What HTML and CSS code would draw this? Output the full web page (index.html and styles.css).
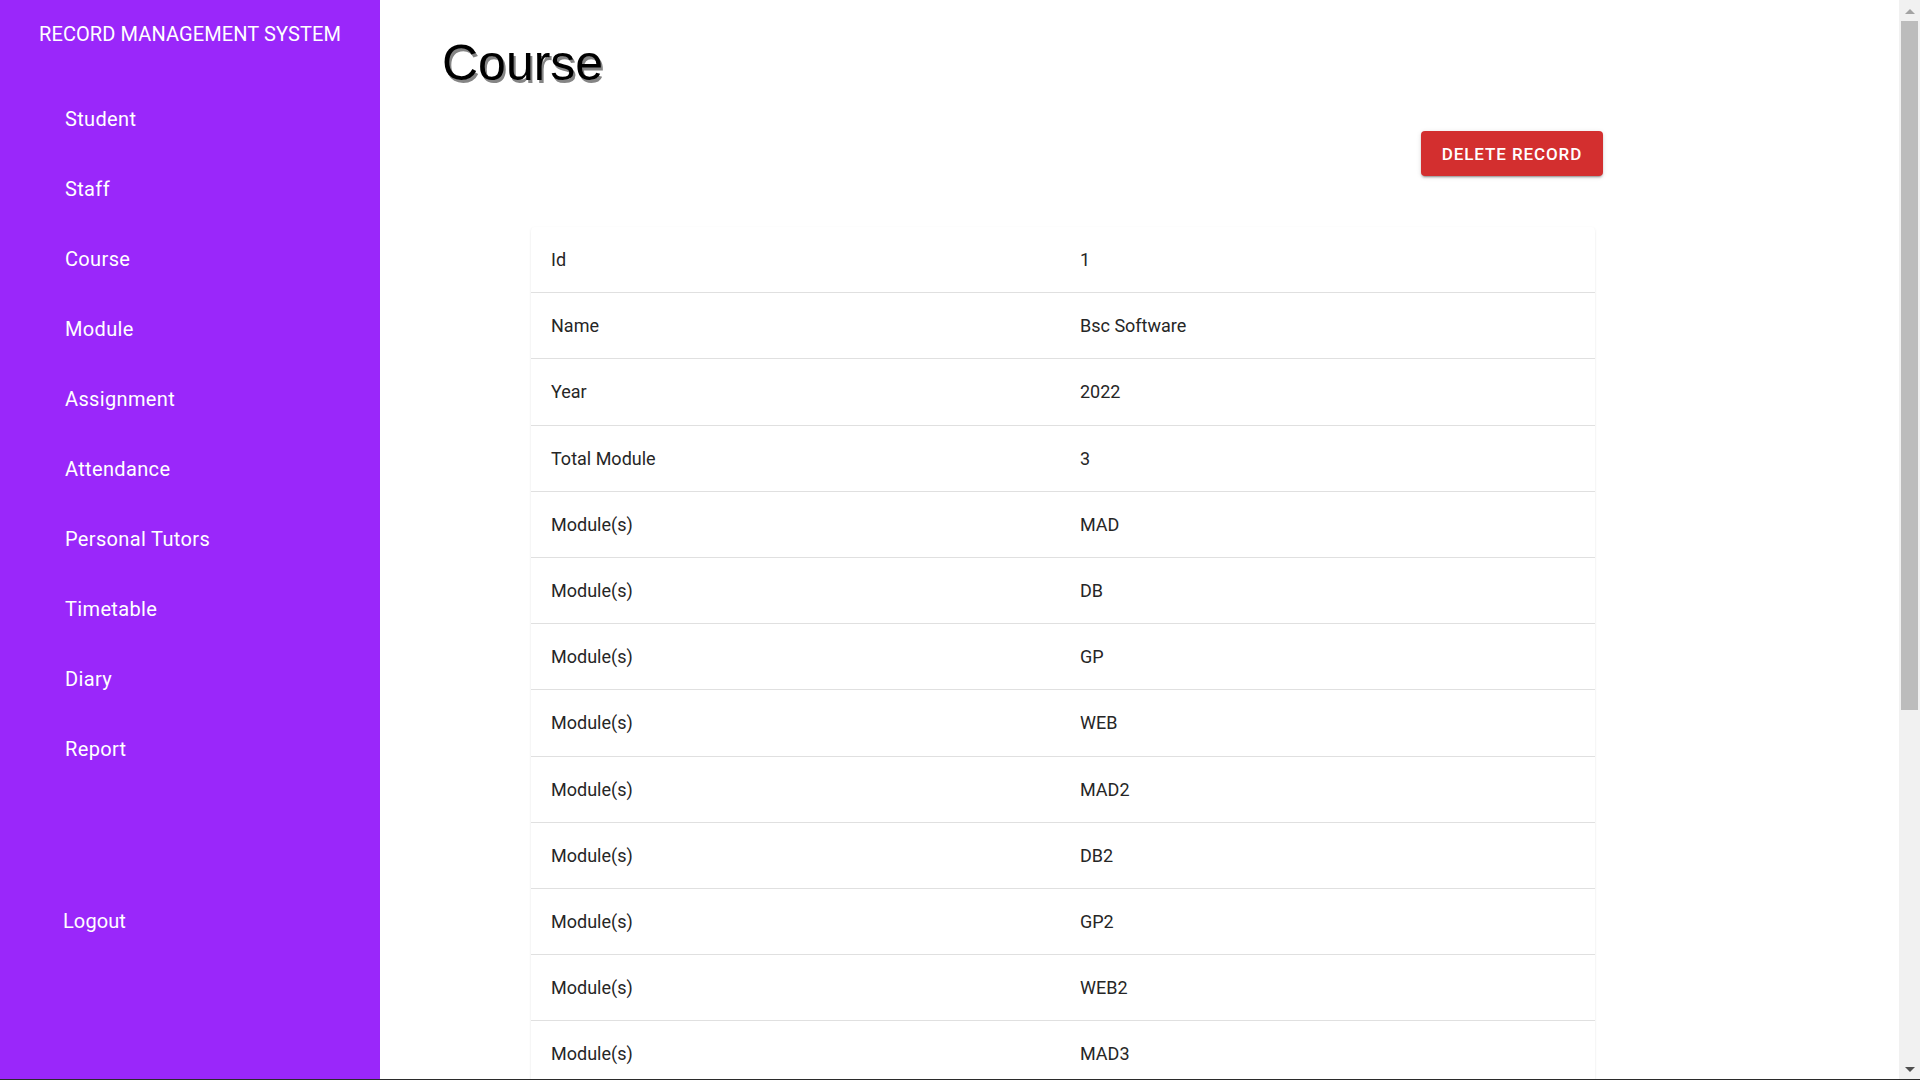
FILE: index.html
```html
<!DOCTYPE html>
<html lang="en">
<head>
<meta charset="utf-8">
<title>Course</title>
<link rel="stylesheet" href="styles.css">
</head>
<body>
<div class="layout">
  <aside class="sidebar">
    <div class="brand">RECORD MANAGEMENT SYSTEM</div>
    <nav class="nav">
      <a class="nav-item">Student</a>
      <a class="nav-item">Staff</a>
      <a class="nav-item">Course</a>
      <a class="nav-item">Module</a>
      <a class="nav-item">Assignment</a>
      <a class="nav-item">Attendance</a>
      <a class="nav-item">Personal Tutors</a>
      <a class="nav-item">Timetable</a>
      <a class="nav-item">Diary</a>
      <a class="nav-item">Report</a>
    </nav>
    <a class="logout">Logout</a>
  </aside>
  <main class="main">
    <h1 class="title">Course</h1>
    <div class="actions">
      <button class="btn-delete">DELETE RECORD</button>
    </div>
    <div class="card">
      <div class="row"><span class="label">Id</span><span class="value">1</span></div>
      <div class="row"><span class="label">Name</span><span class="value">Bsc Software</span></div>
      <div class="row"><span class="label">Year</span><span class="value">2022</span></div>
      <div class="row"><span class="label">Total Module</span><span class="value">3</span></div>
      <div class="row"><span class="label">Module(s)</span><span class="value">MAD</span></div>
      <div class="row"><span class="label">Module(s)</span><span class="value">DB</span></div>
      <div class="row"><span class="label">Module(s)</span><span class="value">GP</span></div>
      <div class="row"><span class="label">Module(s)</span><span class="value">WEB</span></div>
      <div class="row"><span class="label">Module(s)</span><span class="value">MAD2</span></div>
      <div class="row"><span class="label">Module(s)</span><span class="value">DB2</span></div>
      <div class="row"><span class="label">Module(s)</span><span class="value">GP2</span></div>
      <div class="row"><span class="label">Module(s)</span><span class="value">WEB2</span></div>
      <div class="row"><span class="label">Module(s)</span><span class="value">MAD3</span></div>
      <div class="row"><span class="label">Module(s)</span><span class="value">DB3</span></div>
      <div class="row"><span class="label">Module(s)</span><span class="value">GP3</span></div>
      <div class="row"><span class="label">Module(s)</span><span class="value">WEB3</span></div>
      <div class="row"><span class="label">Module(s)</span><span class="value">MAD4</span></div>
      <div class="row"><span class="label">Module(s)</span><span class="value">DB4</span></div>
      <div class="row"><span class="label">Module(s)</span><span class="value">GP4</span></div>
      <div class="row"><span class="label">Module(s)</span><span class="value">WEB4</span></div>
    </div>
  </main>
</div>
<div class="scrollbar" aria-hidden="true">
  <div class="sb-arrow sb-up"></div>
  <div class="sb-thumb"></div>
  <div class="sb-arrow sb-down"></div>
</div>
<div class="window-edge" aria-hidden="true"></div>
</body>
</html>
```
FILE: styles.css
```css
html, body {
  margin: 0;
  padding: 0;
}
body {
  font-family: Roboto, "Liberation Sans", Arial, sans-serif;
  background: #ffffff;
  color: rgba(0, 0, 0, 0.87);
}
.layout {
  display: flex;
  min-height: 100vh;
}
.sidebar {
  position: fixed;
  top: 0;
  left: 0;
  bottom: 0;
  width: 380px;
  background: #9a27fa;
  color: #ffffff;
  display: flex;
  flex-direction: column;
  box-sizing: border-box;
}
.brand {
  font-size: 20px;
  line-height: 24px;
  padding: 22px 0 0 39px;
  white-space: nowrap;
  letter-spacing: 0.1px;
}
.nav {
  display: flex;
  flex-direction: column;
  padding: 61px 0 0 65px;
}
.nav-item {
  font-size: 20px;
  line-height: 24px;
  height: 70px;
  color: #ffffff;
  letter-spacing: 0.35px;
}
.logout {
  font-size: 20px;
  line-height: 24px;
  padding: 102px 0 0 63px;
  color: #ffffff;
  letter-spacing: 0.1px;
}
.main {
  margin-left: 380px;
  flex: 1;
  padding: 0 0 60px 62px;
}
.title {
  font-family: "Liberation Sans", Arial, sans-serif;
  font-weight: 400;
  font-size: 50px;
  line-height: 56px;
  margin: 35px 0 0 0;
  color: #000000;
  text-shadow: 2px 3px 0 #858585;
}
.actions {
  width: 1161px;
  display: flex;
  justify-content: flex-end;
  margin-top: 40px;
}
.btn-delete {
  width: 182px;
  height: 45px;
  padding: 0;
  border: none;
  border-radius: 4px;
  background: #d32f2f;
  color: #ffffff;
  font-family: Roboto, "Liberation Sans", sans-serif;
  font-weight: 500;
  font-size: 17px;
  letter-spacing: 0.9px;
  box-shadow: 0 3px 1px -2px rgba(0,0,0,0.2), 0 2px 2px 0 rgba(0,0,0,0.14), 0 1px 5px 0 rgba(0,0,0,0.12);
}
.card {
  width: 1064px;
  margin: 51px 0 0 89px;
  background: #ffffff;
  border-radius: 4px;
  box-shadow: 0 2px 1px -1px rgba(0,0,0,0.12), 0 1px 1px 0 rgba(0,0,0,0.08), 0 1px 3px 0 rgba(0,0,0,0.08);
}
.row {
  display: grid;
  grid-template-columns: 529px 1fr;
  align-items: center;
  height: 65.2px;
  padding: 0 20px;
  border-bottom: 1px solid #e0e0e0;
  font-size: 18px;
  color: #262626;
}
.row:last-child {
  border-bottom: none;
}
.scrollbar {
  position: fixed;
  top: 0;
  right: 0;
  bottom: 0;
  width: 21px;
  background: #f1f1f1;
  display: flex;
  flex-direction: column;
  align-items: center;
}
.sb-arrow {
  width: 0;
  height: 0;
  border-left: 5px solid transparent;
  border-right: 5px solid transparent;
}
.sb-up {
  margin-top: 9px;
  border-bottom: 5px solid #a3a3a3;
}
.sb-thumb {
  width: 17px;
  height: 689px;
  margin-top: 7px;
  background: #bcbcbc;
}
.sb-down {
  margin-top: auto;
  margin-bottom: 8px;
  border-top: 5px solid #505050;
}
.window-edge {
  position: fixed;
  left: 0;
  right: 0;
  bottom: 0;
  height: 1px;
  background: #2b2b2b;
}
```
